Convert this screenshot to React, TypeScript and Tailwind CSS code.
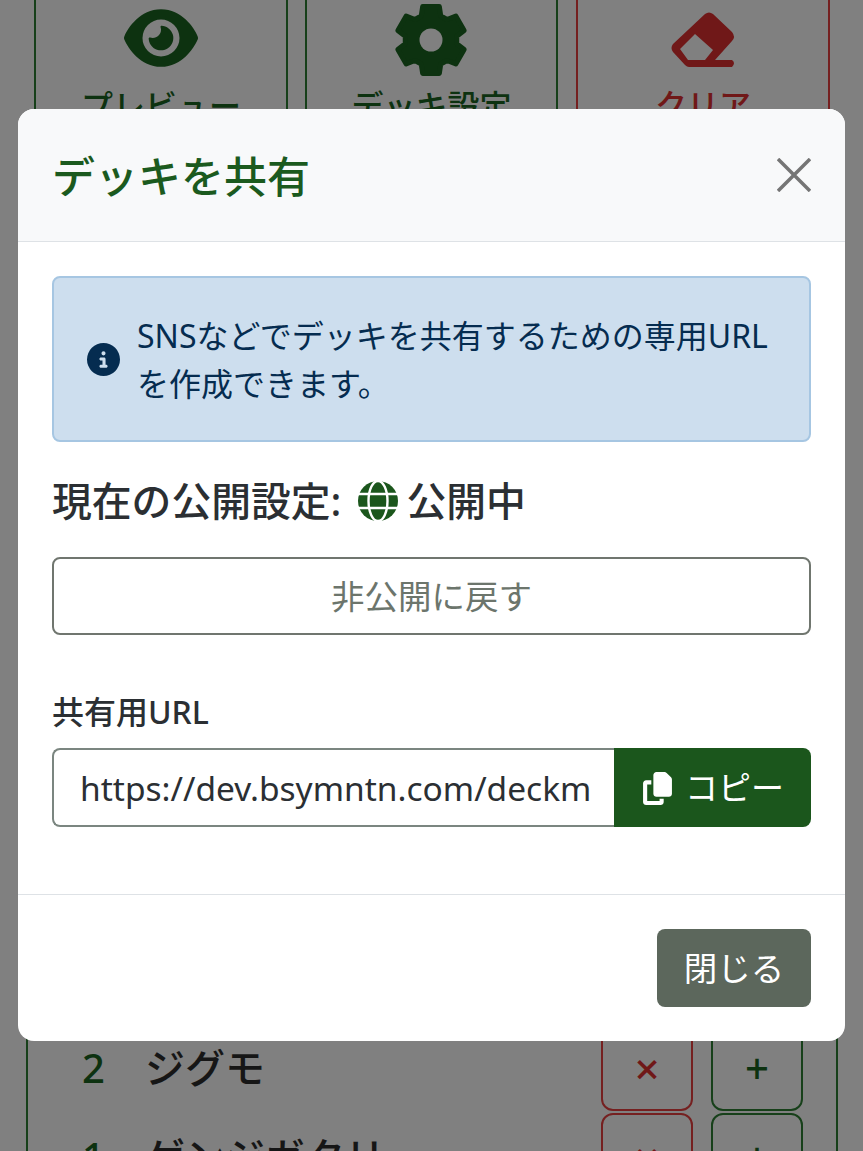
import { FaCircleInfo, FaCopy, FaEye } from 'react-icons/fa6';

const font = { fontFamily: '"Noto Sans", "Noto Sans CJK JP", sans-serif' };

// six-tooth gear outline, one tooth every 60deg starting at the top
const gearPath = (() => {
  const pt = (r: number, deg: number) => {
    const a = ((deg - 90) * Math.PI) / 180;
    return `${(37 + r * Math.cos(a)).toFixed(2)} ${(37 + r * Math.sin(a)).toFixed(2)}`;
  };
  let d = '';
  for (let i = 0; i < 6; i++) {
    const c = i * 60;
    d += `${i === 0 ? 'M' : 'L'}${pt(26, c - 22)} L${pt(34.5, c - 14)} L${pt(34.5, c + 14)} L${pt(26, c + 22)} `;
  }
  return d + 'Z';
})();

function RowButtons() {
  return (
    <div className="flex gap-[18px]">
      <div className="w-[92px] h-[87px] flex items-center justify-center rounded-[12px] border-2 border-[#752020] text-[#701818] text-[44px] font-medium">×</div>
      <div className="w-[92px] h-[87px] flex items-center justify-center rounded-[12px] border-2 border-[#17401a] text-[#0d3210] text-[42px] font-medium">+</div>
    </div>
  );
}

export default function App() {
  return (
    <div className="relative w-[863px] h-[1151px] overflow-hidden bg-[#808080]" style={font}>
      {/* Page behind the dialog */}
      <div className="flex gap-[17px] pl-[34px] -mt-[20px]">
        <div className="w-[254px] h-[150px] border-2 border-[#17401a] flex flex-col items-center text-[#0d3210]">
          <FaEye className="mt-[23px] text-[74px] h-[66px]" />
          <span className="text-[32px] font-medium leading-[40px] mt-[15px] whitespace-nowrap">プレビュー</span>
        </div>
        <div className="w-[253px] h-[150px] border-2 border-[#17401a] flex flex-col items-center text-[#0d3210]">
          <svg width="74" height="74" viewBox="0 0 74 74" className="mt-[21px] -ml-[2px]">
            <path d={gearPath} fill="currentColor" stroke="currentColor" strokeWidth="5" strokeLinejoin="round" />
            <circle cx="37" cy="37" r="11.5" fill="#808080" />
          </svg>
          <span className="text-[32px] font-medium leading-[40px] mt-[9px] whitespace-nowrap">デッキ設定</span>
        </div>
        <div className="w-[254px] h-[150px] ml-px border-2 border-[#752020] flex flex-col items-center text-[#701818]">
          <svg width="90" height="75" viewBox="0 0 90 75" className="mt-[23px] ml-[5px]">
            <path
              fillRule="evenodd"
              fill="currentColor"
              d="M44 9 Q48 6 52 9 L71 27 Q75 32 71 36 L54 55 H71 Q75 58 71 62 H28 Q26 62 24 60 L12 47 Q9 43 12 39 Z M34 29 L19 44 L27 55 H44 L52 45 Z"
            />
          </svg>
          <span className="text-[32px] font-medium leading-[40px] mt-[5px] whitespace-nowrap">クリア</span>
        </div>
      </div>

      <div className="ml-[26px] mt-[904px] w-[812px] border-x-2 border-[#17401a] pl-[54px] pr-[33px] flex flex-col gap-[2px]">
        <div className="flex items-center justify-between -mt-[10px]">
          <div className="flex items-center gap-[40px] text-[40px] leading-[56px] font-medium text-[#161616]">
            <span className="text-[#0d3210]">2</span>
            <span>ジグモ</span>
          </div>
          <RowButtons />
        </div>
        <div className="flex items-center justify-between">
          <div className="flex items-center gap-[40px] text-[40px] leading-[56px] font-medium text-[#161616]">
            <span className="text-[#0d3210]">1</span>
            <span>ゲンジガタリ</span>
          </div>
          <RowButtons />
        </div>
      </div>

      {/* Dialog */}
      <div className="absolute left-[18px] top-[109px] w-[827px] h-[932px] rounded-[16px] bg-white flex flex-col overflow-hidden">
        <div className="h-[133px] shrink-0 bg-[#f8f9fa] border-b border-[#dee2e6] flex items-center justify-between pl-[34px] pr-[34px]">
          <h2 className="text-[43px] font-medium leading-none text-[#1b5a1e] pt-[3px]">デッキを共有</h2>
          <svg width="34" height="34" viewBox="0 0 34 34" className="text-[#757575]">
            <path d="M1 1 33 33M33 1 1 33" stroke="currentColor" strokeWidth="3.5" />
          </svg>
        </div>

        <div className="flex-1 px-[34px] pt-[34px] flex flex-col">
          <div className="h-[166px] rounded-[8px] border-2 border-[#a6c6e2] bg-[#cddeee] flex items-center pl-[33px] pr-[30px] gap-[17px] text-[#052c50]">
            <FaCircleInfo className="text-[33px] shrink-0" />
            <p className="text-[32px] leading-[48px] pt-px">SNSなどでデッキを共有するための専用URLを作成できます。</p>
          </div>

          <div className="mt-[32px] h-[54px] flex items-center text-[39.8px] font-medium text-[#2b2f33]">
            <span>現在の公開設定:</span>
            <svg width="40" height="42" viewBox="0 0 40 42" className="ml-[17px] mr-[8px] text-[#1b561c]">
              <circle cx="20" cy="21" r="20" fill="currentColor" />
              <ellipse cx="20" cy="21" rx="9.5" ry="20" fill="none" stroke="#fff" strokeWidth="2.4" />
              <path d="M0 14H40M0 28H40" stroke="#fff" strokeWidth="2.4" />
            </svg>
            <span>公開中</span>
          </div>

          <div className="mt-[29px] h-[78px] rounded-[8px] border-2 border-[#70766f] flex items-center justify-center pt-px text-[33.5px] text-[#6c756c]">
            非公開に戻す
          </div>

          <label className="mt-[54px] text-[32px] font-medium leading-[46px] text-[#2b2f33]">共有用URL</label>

          <div className="mt-[13px] h-[79px] flex">
            <div className="flex-1 min-w-0 rounded-l-[8px] border-2 border-[#7b8680] border-r-0 flex items-center pl-[26px] pt-[2px] text-[33.5px] text-[#2b2f33] overflow-hidden whitespace-nowrap">
              https://dev.bsymntn.com/deckm
            </div>
            <div className="w-[197px] shrink-0 rounded-r-[8px] bg-[#1b561c] text-white flex items-center justify-center gap-[11px] pt-px text-[33px]">
              <FaCopy className="text-[33px]" />
              <span>コピー</span>
            </div>
          </div>
        </div>

        <div className="h-[147px] shrink-0 border-t border-[#dee2e6] flex items-center justify-end pr-[34px]">
          <div className="w-[154px] h-[78px] rounded-[8px] bg-[#5c675c] text-white text-[33.5px] flex items-center justify-center">閉じる</div>
        </div>
      </div>
    </div>
  );
}
